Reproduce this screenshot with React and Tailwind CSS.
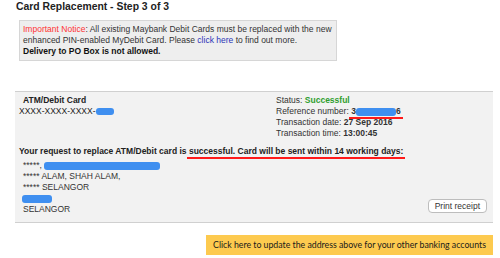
import React from "react";

// blue scribble used to hide private details
const Scribble = ({ w, h = 7 }) => (
  <span
    className="inline-block align-middle rounded-[3px] bg-[#3f8ff0] blur-[0.4px]"
    style={{ width: w, height: h }}
  />
);

// red marker line drawn under text
const Marked = ({ children }) => (
  <span className="relative">
    {children}
    <span className="absolute left-[-2px] right-[-2px] bottom-[-3px] h-[2px] bg-[#ff1a1a]" />
  </span>
);

export default function App() {
  return (
    <div className="w-[500px] h-[258px] bg-white text-[#222] font-['Liberation_Sans',Arial,sans-serif] overflow-hidden">
      {/* Title */}
      <div className="pl-[16px] pt-[1px] text-[10.4px] leading-[11px] font-bold">
        Card Replacement - Step 3 of 3
      </div>

      {/* Notice */}
      <div className="ml-[19px] mt-[8px] w-[318px] border border-[#d6d6d6] bg-[#eeeeee] px-[3px] py-[3px] text-[8.5px] leading-[11px] text-[#333]">
        <div>
          <span className="text-[#ff3333]">Important Notice</span>: All existing Maybank Debit Cards must be replaced with the new
        </div>
        <div>
          enhanced PIN-enabled MyDebit Card. Please <span className="text-[#2b35b8]">click here</span> to find out more.
        </div>
        <div className="font-bold text-[#111]">Delivery to PO Box is not allowed.</div>
      </div>

      {/* Result panel */}
      <div className="ml-[15px] mt-[30px] w-[478px] border-t border-b border-[#d0d0d0] bg-[#f2f2f2] pt-[3px] pb-[7px] pl-[4px] pr-[6px] text-[8.5px] leading-[11px]">
        <div className="flex">
          <div className="w-[257px]">
            <div className="pl-[4px] font-bold">ATM/Debit Card</div>
            <div>
              XXXX-XXXX-XXXX-<Scribble w={18} />
            </div>
          </div>
          <div className="text-[#333]">
            <div>
              Status: <span className="font-bold text-[#2f9e2f]">Successful</span>
            </div>
            <div>
              Reference number:{" "}
              <Marked>
                <span className="font-bold">3</span>
                <Scribble w={40} h={8} />
                <span className="font-bold">6</span>
              </Marked>
            </div>
            <div>
              Transaction date: <span className="font-bold">27 Sep 2016</span>
            </div>
            <div>
              Transaction time: <span className="font-bold">13:00:45</span>
            </div>
          </div>
        </div>

        <div className="mt-[7px] font-bold">
          Your request to replace ATM/Debit card is{" "}
          <Marked>successful. Card will be sent within 14 working days:</Marked>
        </div>

        <div className="mt-[3px] flex items-end justify-between">
          <div className="pl-[4px] text-[#333]">
            <div>
              *****, <Scribble w={116} h={8} />
            </div>
            <div>***** ALAM, SHAH ALAM,</div>
            <div>***** SELANGOR</div>
            <div className="-ml-[1px]">
              <Scribble w={30} h={8} />
            </div>
            <div>SELANGOR</div>
          </div>
          <button className="mb-[2px] h-[14px] rounded-[4px] border border-[#bdbdbd] bg-white px-[6px] text-[8.5px] leading-[12px] text-[#333]">
            Print receipt
          </button>
        </div>
      </div>

      {/* Update address button */}
      <div className="ml-[15px] mt-[12px] flex w-[478px] justify-end">
        <div className="flex h-[20px] w-[287px] items-center justify-center bg-[#fdca4f] font-['Lato',sans-serif] text-[8.75px] text-[#1a1a1a]">
          Click here to update the address above for your other banking accounts
        </div>
      </div>
    </div>
  );
}
